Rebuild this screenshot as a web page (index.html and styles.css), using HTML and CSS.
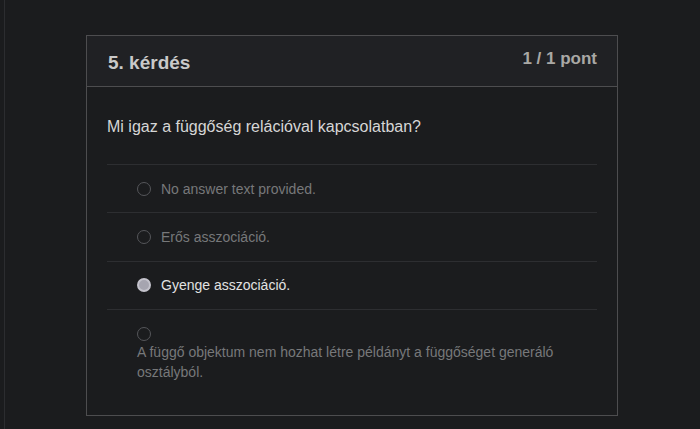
FILE: index.html
```html
<!DOCTYPE html>
<html lang="hu">
<head>
<meta charset="utf-8">
<title>5. kérdés</title>
<link rel="stylesheet" href="styles.css">
</head>
<body>
<div class="layout">
  <div class="rail"></div>
  <main class="main">
    <section class="card">
      <header class="card-head">
        <h2 class="q-title">5. kérdés</h2>
        <div class="q-points">1 / 1 pont</div>
      </header>
      <div class="card-body">
        <p class="q-text">Mi igaz a függőség relációval kapcsolatban?</p>
        <ul class="answers">
          <li class="answer">
            <span class="radio"></span>
            <span class="answer-text">No answer text provided.</span>
          </li>
          <li class="answer">
            <span class="radio"></span>
            <span class="answer-text">Erős asszociáció.</span>
          </li>
          <li class="answer selected">
            <span class="radio"></span>
            <span class="answer-text">Gyenge asszociáció.</span>
          </li>
          <li class="answer long">
            <span class="radio"></span>
            <span class="answer-text">A függő objektum nem hozhat létre példányt a függőséget generáló osztályból.</span>
          </li>
        </ul>
      </div>
    </section>
  </main>
</div>
</body>
</html>
```

FILE: styles.css
```css
* { box-sizing: border-box; }
html, body {
  margin: 0;
  padding: 0;
  height: 100%;
  background: #1b1c1e;
  font-family: Arial, "Liberation Sans", sans-serif;
}
.layout {
  display: flex;
  min-height: 100%;
}
.rail {
  width: 5px;
  flex: none;
  border-right: 1px solid #2c2d30;
}
.main {
  flex: 1;
  display: flex;
  justify-content: center;
  align-items: flex-start;
  padding: 35px 1px 0 0;
}
.card {
  width: 532px;
  border: 1px solid #4d4d4f;
  background: #1b1c1e;
}
.card-head {
  display: flex;
  justify-content: space-between;
  align-items: flex-start;
  height: 51px;
  padding: 14px 20px 0 21px;
  background: #202124;
  border-bottom: 1px solid #4d4d4f;
}
.q-title {
  margin: 2px 0 0;
  font-size: 19px;
  font-weight: bold;
  line-height: 21px;
  color: #c9c9c9;
}
.q-points {
  font-size: 17px;
  font-weight: bold;
  line-height: 18px;
  color: #a9a8a4;
}
.card-body {
  padding: 0 20px 20px;
}
.q-text {
  margin: 0;
  padding: 30px 0 28px;
  font-size: 16px;
  line-height: 19px;
  color: #d6d6d6;
}
.answers {
  list-style: none;
  margin: 0;
  padding: 0;
}
.answer {
  display: flex;
  flex-wrap: wrap;
  align-items: center;
  column-gap: 10px;
  padding: 13.67px 30px;
  border-top: 1px solid #2d2e31;
  font-size: 14px;
  line-height: 20px;
  color: #77787a;
}
.radio {
  width: 14px;
  height: 14px;
  border-radius: 50%;
  border: 1.5px solid #55565a;
  flex: none;
}
.answer-text {
  flex: 0 1 auto;
}
.answer.long { align-items: flex-start; }
.answer.long .radio { margin: 3px 0 1px; }
.answer.selected { color: #e2e2e2; }
.answer.selected .radio {
  background: #a6a5b0;
  border: 2px solid #c4c3cc;
}
```
